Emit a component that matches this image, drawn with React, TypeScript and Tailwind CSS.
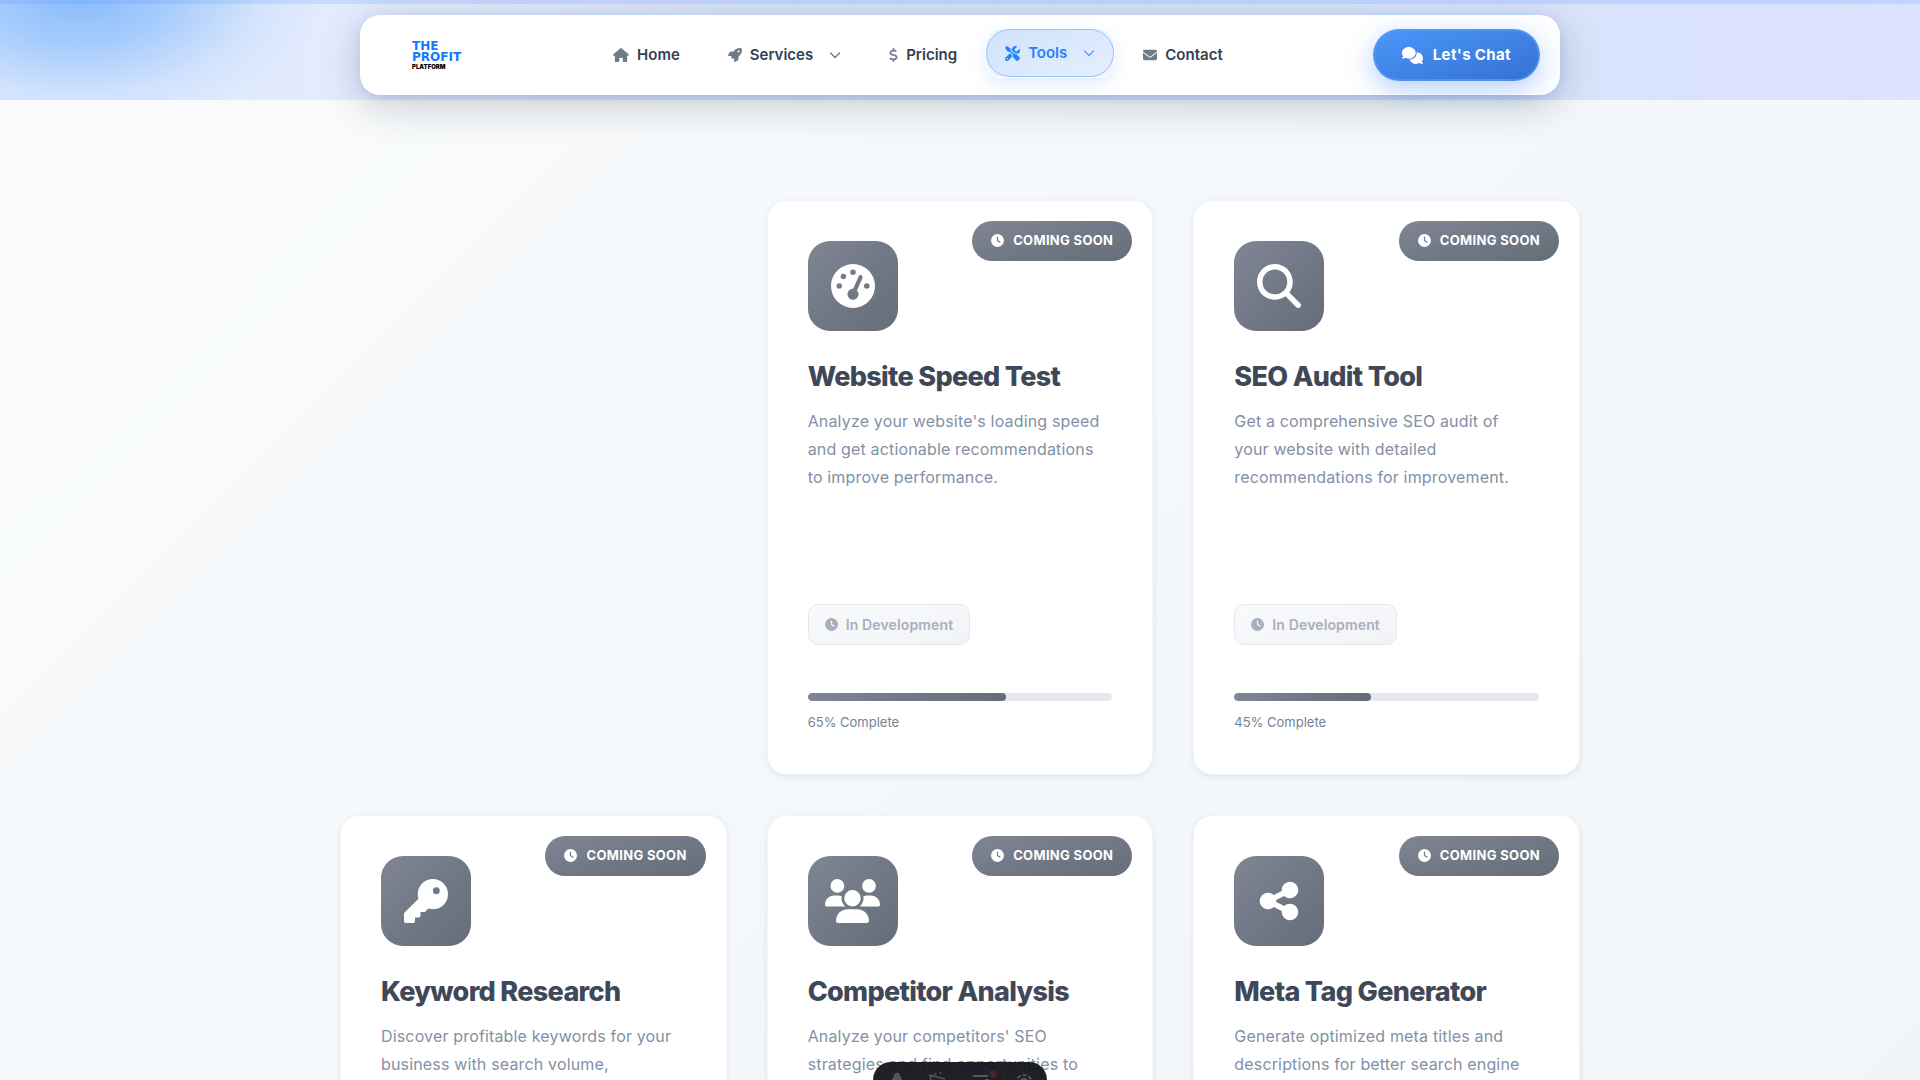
import type { ReactNode } from "react";
import type { IconType } from "react-icons";
import {
  FaHouse,
  FaRocket,
  FaDollarSign,
  FaScrewdriverWrench,
  FaEnvelope,
  FaComments,
  FaClock,
  FaGaugeHigh,
  FaMagnifyingGlass,
  FaKey,
  FaUsers,
  FaShareNodes,
} from "react-icons/fa6";

type Tool = {
  title: string;
  lines: string[];
  icon: IconType;
  iconClass?: string;
  progress?: number;
};

const tools: Tool[] = [
  {
    title: "Website Speed Test",
    lines: ["Analyze your website's loading speed", "and get actionable recommendations", "to improve performance."],
    icon: FaGaugeHigh,
    progress: 65,
  },
  {
    title: "SEO Audit Tool",
    lines: ["Get a comprehensive SEO audit of", "your website with detailed", "recommendations for improvement."],
    icon: FaMagnifyingGlass,
    progress: 45,
  },
  {
    title: "Keyword Research",
    lines: ["Discover profitable keywords for your", "business with search volume,"],
    icon: FaKey,
  },
  {
    title: "Competitor Analysis",
    lines: ["Analyze your competitors' SEO", "strategies and find opportunities to"],
    icon: FaUsers,
    iconClass: "h-11 w-[55px]",
  },
  {
    title: "Meta Tag Generator",
    lines: ["Generate optimized meta titles and", "descriptions for better search engine"],
    icon: FaShareNodes,
  },
];

function Chevron() {
  return (
    <svg viewBox="0 0 12 12" className="ml-2 size-3 opacity-75" fill="none" stroke="currentColor" strokeWidth="1.2" strokeLinecap="round" strokeLinejoin="round">
      <path d="M1.5 4 6 8.5 10.5 4" />
    </svg>
  );
}

function NavLink({
  icon: Icon,
  iconClass = "h-3.5 w-3.5",
  children,
  menu,
}: {
  icon: IconType;
  iconClass?: string;
  children: ReactNode;
  menu?: boolean;
}) {
  return (
    <a href="#" className="flex h-12 items-center gap-2 px-[19px] text-[15px] font-semibold text-[#334155]">
      <span className="text-[#6f7a8b]">
        <Icon className={iconClass} />
      </span>
      {children}
      {menu && <Chevron />}
    </a>
  );
}

function Header() {
  return (
    <header className="relative h-[100px] bg-[linear-gradient(90deg,#dbe8fd_0%,#e3ebfd_18%,#d8e3f9_40%,#d9e3fd_85%,#dde2fe_100%)] px-6">
      <div className="absolute inset-0 bg-[radial-gradient(ellipse_240px_140px_at_80px_-10px,#85b9fd_0%,#9ac5fccc_40%,#bfd8fd66_75%,transparent_100%)]" />
      <div className="absolute inset-0 bg-[repeating-linear-gradient(90deg,transparent_0,transparent_49px,rgba(59,130,246,0.025)_49px,rgba(59,130,246,0.025)_50px)]" />
      <div className="absolute inset-x-0 top-0 h-1 bg-[#5a9bfb]/20" />
      <div className="relative h-full pt-[15px]">
        <nav className="mx-auto flex h-20 max-w-[1200px] items-center justify-between rounded-[20px] bg-white px-5 shadow-[0_10px_40px_rgba(15,23,42,0.2),0_2px_10px_rgba(59,130,246,0.15)]">
          <a href="#" className="flex w-[83px] flex-col pl-8 font-['DejaVu_Sans'] font-bold">
            <span className="text-[12px] leading-[11px] text-[#0f7bff]">THE</span>
            <span className="text-[12px] leading-[11px] text-[#0f7bff]">PROFIT</span>
            <span className="font-['Inter'] text-[6px] font-black leading-[7px] text-black">PLATFORM</span>
          </a>
          <div className="flex items-center gap-2.5">
            <NavLink icon={FaHouse} iconClass="h-3.5 w-4">Home</NavLink>
            <NavLink icon={FaRocket} menu>Services</NavLink>
            <NavLink icon={FaDollarSign} iconClass="h-3.5 w-[9px]">Pricing</NavLink>
            <a
              href="#"
              className="relative mb-1 flex h-12 items-center gap-2 rounded-2xl bg-[#edf4ff] px-[19px] text-[15px] font-semibold text-[#2483f8] shadow-[0_0_0_1px_#ffffff,0_6px_18px_rgba(59,130,246,0.16)]"
            >
              <span className="absolute inset-0 rounded-3xl border border-[#93c5fd] bg-gradient-to-br from-[#cfe2fd] to-[#e6effd]" />
              <FaScrewdriverWrench className="relative size-[15px]" />
              <span className="relative">Tools</span>
              <span className="relative">
                <Chevron />
              </span>
            </a>
            <NavLink icon={FaEnvelope}>Contact</NavLink>
          </div>
          <button
            type="button"
            className="flex h-[52px] items-center gap-2.5 rounded-[26px] border-2 border-[#5a9bf0]/70 bg-gradient-to-br from-[#4a98fb] to-[#3670d2] bg-origin-border px-[27px] text-[15px] font-bold tracking-wide text-white shadow-[0_8px_28px_rgba(59,130,246,0.38)]"
          >
            <FaComments className="size-[21px]" />
            Let's Chat
          </button>
        </nav>
      </div>
    </header>
  );
}

function ToolCard({ tool, className }: { tool: Tool; className?: string }) {
  const Icon = tool.icon;
  return (
    <article
      className={`relative flex min-h-[575px] flex-col rounded-[20px] border border-[#f3f6fa] bg-white p-10 shadow-[0_2px_6px_rgba(15,23,42,0.08)] ${className ?? ""}`}
    >
      <div className="absolute right-5 top-5 flex h-10 items-center gap-[9px] rounded-[20px] bg-gradient-to-br from-[#808593] to-[#646d79] px-[19px] text-[13px] font-bold tracking-wide text-white">
        <FaClock className="mb-0.5 size-[13px]" />
        COMING SOON
      </div>
      <div className="flex size-[90px] items-center justify-center rounded-[22px] bg-gradient-to-br from-[#808593] to-[#646d79] text-white">
        <Icon className={tool.iconClass ?? "size-11"} />
      </div>
      <h3 className="mt-[25px] text-[27px] font-extrabold leading-[42px] tracking-tight text-[#3f4859]">{tool.title}</h3>
      <p className="mt-[9px] text-[16px] leading-[28px] tracking-[0.01em] text-[#8290a6]">
        {tool.lines.map((line) => (
          <span key={line} className="block whitespace-nowrap">
            {line}
          </span>
        ))}
      </p>
      {tool.progress !== undefined && (
        <div className="mt-auto">
          <button
            type="button"
            disabled
            className="flex h-[41px] items-center gap-2 rounded-[10px] border border-[#e5e7ec] bg-gradient-to-br from-[#f9fafb] to-[#f2f3f8] px-4 text-[14px] font-semibold tracking-[0.01em] text-[#a9afbb]"
          >
            <FaClock className="size-[13px]" />
            In Development
          </button>
          <div className="mt-12 h-2 overflow-hidden rounded-full bg-[#e7e8ed]">
            <div
              className="h-full rounded-full bg-gradient-to-r from-[#808593] to-[#646d79]"
              style={{ width: `${tool.progress}%` }}
            />
          </div>
          <div className="mt-2.5 text-[13px] leading-[23px] text-[#73819a]">{tool.progress}% Complete</div>
        </div>
      )}
    </article>
  );
}

function Dock() {
  return (
    <div className="fixed inset-x-0 bottom-0 mx-auto flex h-[18px] w-[174px] overflow-hidden rounded-t-[18px] bg-[#13151b]/95 text-[#55565c]">
      <svg viewBox="0 0 174 18" className="h-[18px] w-full" fill="none" stroke="currentColor" strokeWidth="2">
        <path d="M18 20 L22 11 H26 L30 20 Z" fill="currentColor" stroke="none" />
        <path d="M58 20 L57 13 L72 17 M63 13 L62 11 M67 12 L68 10" strokeWidth="1.5" />
        <path d="M100 14 H115 M112 18 H116" />
        <circle cx="120" cy="12" r="3.5" fill="#4a2230" stroke="none" />
        <path d="M132 0 V18" stroke="#26282e" strokeWidth="1" />
        <circle cx="151" cy="21" r="8" strokeDasharray="4 2" />
        <circle cx="151" cy="21" r="4" />
      </svg>
    </div>
  );
}

export default function App() {
  return (
    <div className="h-screen overflow-hidden bg-[linear-gradient(135deg,#fafbfc_0%,#f4f8fb_50%,#f1f5f8_100%)] font-['Inter',sans-serif]">
      <Header />
      <main className="mx-auto mt-[100px] grid max-w-[1240px] grid-cols-3 gap-10">
        {tools.map((tool, i) => (
          <ToolCard key={tool.title} tool={tool} className={i === 0 ? "col-start-2" : ""} />
        ))}
      </main>
      <Dock />
    </div>
  );
}
